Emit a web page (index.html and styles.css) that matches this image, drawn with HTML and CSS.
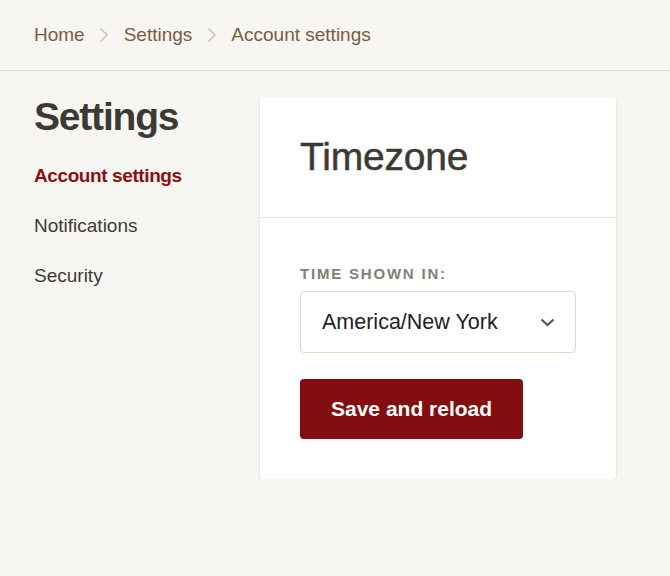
FILE: index.html
```html
<!DOCTYPE html>
<html lang="en">
<head>
<meta charset="utf-8">
<title>Account settings</title>
<link rel="stylesheet" href="styles.css">
</head>
<body>
<header class="topbar">
  <nav class="crumbs">
    <a class="crumb" href="#">Home</a>
    <svg class="crumb-sep" width="10" height="16" viewBox="0 0 10 16"><polyline points="1.5,1.5 8,8 1.5,14.5" fill="none" stroke="#d3c3a5" stroke-width="1.5"/></svg>
    <a class="crumb" href="#">Settings</a>
    <svg class="crumb-sep" width="10" height="16" viewBox="0 0 10 16"><polyline points="1.5,1.5 8,8 1.5,14.5" fill="none" stroke="#d3c3a5" stroke-width="1.5"/></svg>
    <span class="crumb">Account settings</span>
  </nav>
</header>
<main class="layout">
  <aside class="sidebar">
    <h1 class="sidebar-title">Settings</h1>
    <ul class="side-nav">
      <li><a class="side-link active" href="#">Account settings</a></li>
      <li><a class="side-link" href="#">Notifications</a></li>
      <li><a class="side-link" href="#">Security</a></li>
    </ul>
  </aside>
  <section class="card">
    <div class="card-head">
      <h2 class="card-title">Timezone</h2>
    </div>
    <div class="card-body">
      <label class="field-label">TIME SHOWN IN:</label>
      <div class="select">
        <span class="select-value">America/New York</span>
        <svg class="select-arrow" width="15" height="9" viewBox="0 0 15 9"><polyline points="1.5,1.5 7.5,7 13.5,1.5" fill="none" stroke="#555" stroke-width="2.2"/></svg>
      </div>
      <button class="btn-primary" type="button">Save and reload</button>
    </div>
  </section>
</main>
</body>
</html>
```
FILE: styles.css
```css
* { box-sizing: border-box; }
html, body { margin: 0; padding: 0; }
body {
  background: #f8f6f2;
  font-family: "Liberation Sans", Arial, sans-serif;
  color: #3d3a36;
}
a { text-decoration: none; color: inherit; }

.topbar {
  height: 71px;
  border-bottom: 1px solid #e5dccb;
  display: flex;
  align-items: center;
  padding: 0 34px 1px;
}
.crumbs {
  display: flex;
  align-items: center;
  gap: 14.5px;
  font-size: 19px;
  color: #7b5c3e;
}
.crumb-sep { display: block; }

.layout {
  display: flex;
  padding: 26px 0 0 34px;
}
.sidebar {
  width: 226px;
  flex: none;
}
.sidebar-title {
  margin: 0 0 14px;
  font-size: 39px;
  line-height: 40px;
  font-weight: 700;
  letter-spacing: -1.2px;
  color: #3d3a36;
}
.side-nav {
  list-style: none;
  margin: 0;
  padding: 0;
}
.side-link {
  display: block;
  font-size: 19px;
  line-height: 50px;
  color: #3d3a36;
}
.side-link.active {
  color: #8a1010;
  font-weight: 700;
  letter-spacing: -0.4px;
}

.card {
  width: 356px;
  background: #fff;
  border-radius: 4px;
  box-shadow: 0 1px 3px rgba(60, 50, 30, 0.16);
}
.card-head {
  padding: 40px 40px 40px;
  border-bottom: 1px solid #ebe6da;
}
.card-title {
  margin: 0;
  font-size: 39px;
  line-height: 40px;
  font-weight: 400;
  letter-spacing: -0.2px;
  -webkit-text-stroke: 0.5px #3d3a36;
  color: #3d3a36;
}
.card-body {
  padding: 47px 40px 40px;
}
.field-label {
  display: block;
  font-size: 15px;
  line-height: 18px;
  font-weight: 700;
  letter-spacing: 1.8px;
  color: #838073;
  margin-bottom: 8px;
}
.select {
  height: 62px;
  border: 1px solid #e2dac8;
  border-radius: 4px;
  display: flex;
  align-items: center;
  justify-content: space-between;
  padding: 0 20px 0 21px;
}
.select-value {
  font-size: 21.5px;
  color: #222;
}
.select-arrow { display: block; }
.btn-primary {
  margin-top: 26px;
  height: 60px;
  padding: 0 31px;
  border: 0;
  border-radius: 4px;
  background: #820e10;
  color: #fff;
  font-family: "Liberation Sans", Arial, sans-serif;
  font-size: 21px;
  font-weight: 700;
  cursor: pointer;
}
```
